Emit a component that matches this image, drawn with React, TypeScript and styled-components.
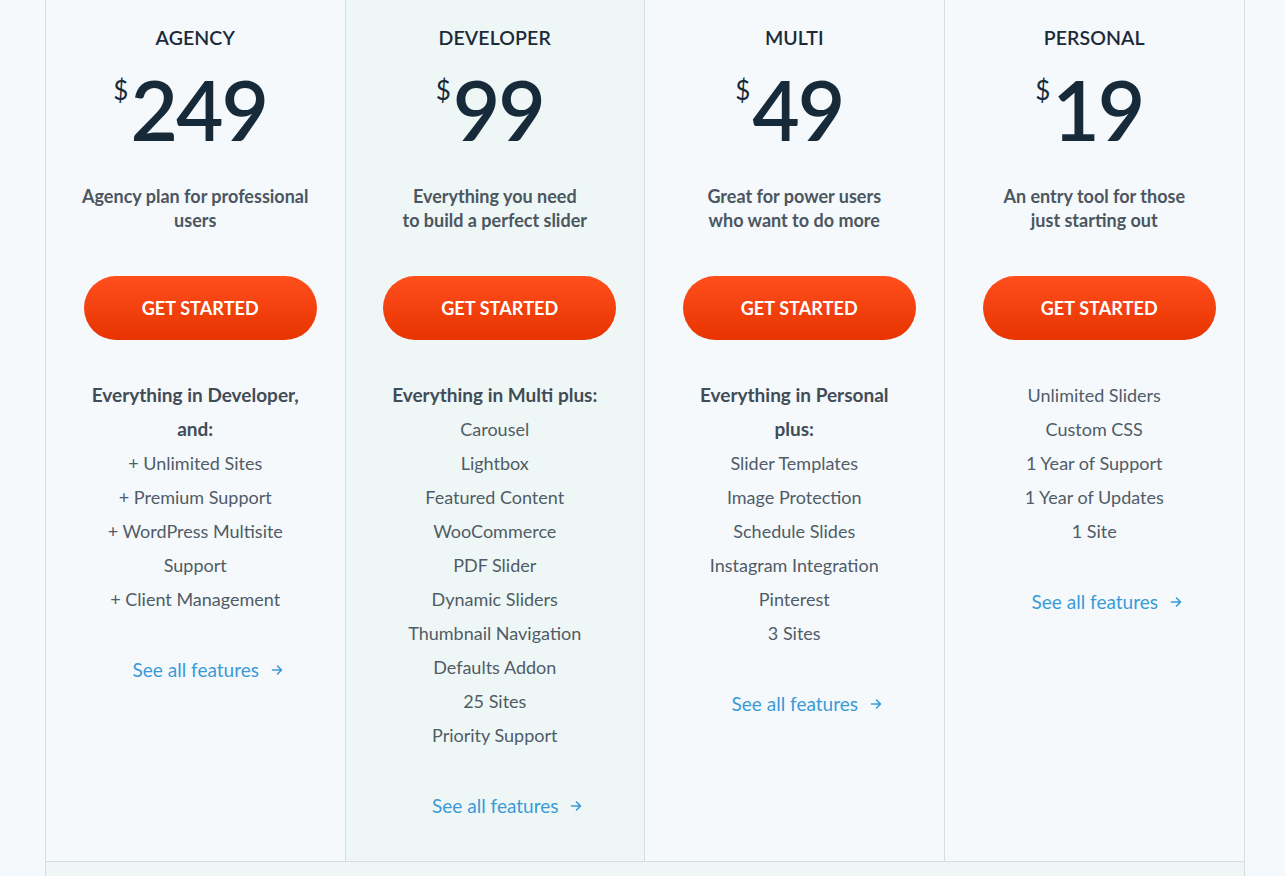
import React from "react";
import styled, { createGlobalStyle } from "styled-components";

const GlobalStyle = createGlobalStyle`
  html, body {
    margin: 0;
    padding: 0;
    background: #f5f9fc;
    font-family: Lato, "Open Sans", sans-serif;
    -webkit-font-smoothing: antialiased;
  }
`;

const Page = styled.div`
  padding-left: 45px;
  height: 876px;
  overflow: hidden;
`;

const Table = styled.div`
  width: 1200px;
  box-sizing: border-box;
  border-left: 1px solid #d8dcdf;
  border-right: 1px solid #d8dcdf;
`;

const Columns = styled.div`
  display: grid;
  grid-template-columns: repeat(4, minmax(0, 1fr));
  height: 861px;
`;

const Column = styled.div<{ $featured?: boolean; $last?: boolean }>`
  display: flex;
  flex-direction: column;
  align-items: center;
  min-width: 0;
  padding: 25px 0 0;
  background: ${({ $featured }) => ($featured ? "#eff7f6" : "transparent")};
  border-right: ${({ $last }) => ($last ? "none" : "1px solid #d8dcdf")};
  text-align: center;
`;

const PlanName = styled.h3`
  margin: 0;
  font-size: 19.5px;
  line-height: 26px;
  font-weight: 600;
  letter-spacing: 0.1px;
  color: #1c2a39;
`;

const Price = styled.div`
  display: flex;
  align-items: flex-start;
  margin: 17px 10px 0 0;
  color: #172a3a;
`;

const Currency = styled.span`
  font-size: 26px;
  line-height: 1;
  margin-top: 9px;
  margin-right: 2px;
`;

const Amount = styled.span`
  font-size: 82px;
  font-weight: 600;
  line-height: 82px;
  letter-spacing: -2px;
`;

const Description = styled.p`
  margin: 34px 0 0;
  font-size: 18px;
  line-height: 24px;
  font-weight: 700;
  color: #4b5661;
`;

const Button = styled.a`
  display: flex;
  align-items: center;
  justify-content: center;
  width: 233px;
  height: 64px;
  margin: 44px 0 0 10px;
  border-radius: 32px;
  background: linear-gradient(180deg, #ff4f1d 0%, #e73400 100%);
  color: #fff;
  font-size: 18px;
  font-weight: 700;
  letter-spacing: 0.1px;
  text-decoration: none;
`;

const Features = styled.ul`
  list-style: none;
  margin: 38px 0 0;
  padding: 0;
`;

const Feature = styled.li<{ $lead?: boolean }>`
  font-size: ${({ $lead }) => ($lead ? "19px" : "18px")};
  line-height: 34px;
  font-weight: ${({ $lead }) => ($lead ? 700 : 400)};
  color: ${({ $lead }) => ($lead ? "#414c57" : "#505c67")};
`;

const SeeAll = styled.a`
  display: flex;
  align-items: center;
  gap: 12px;
  margin: 37px 0 0 25px;
  font-size: 19px;
  line-height: 34px;
  color: #3a9ad6;
  text-decoration: none;
`;

const Footer = styled.div`
  height: 40px;
  border-top: 1px solid #d8dcdf;
  background: #eff7f6;
`;

const Arrow = () => (
  <svg width="12" height="12" viewBox="0 0 12 12" fill="none" stroke="#3a9ad6" strokeWidth="1.6" strokeLinecap="round" strokeLinejoin="round">
    <path d="M1.5 6h9M6.5 2l4 4-4 4" />
  </svg>
);

type Plan = {
  name: string;
  price: string;
  desc: React.ReactNode;
  lead?: React.ReactNode;
  features: string[];
  featured?: boolean;
};

const plans: Plan[] = [
  {
    name: "AGENCY",
    price: "249",
    desc: (
      <>
        Agency plan for professional
        <br />
        users
      </>
    ),
    lead: (
      <>
        Everything in Developer,
        <br />
        and:
      </>
    ),
    features: ["+ Unlimited Sites", "+ Premium Support", "+ WordPress Multisite\nSupport", "+ Client Management"],
  },
  {
    name: "DEVELOPER",
    price: "99",
    featured: true,
    desc: (
      <>
        Everything you need
        <br />
        to build a perfect slider
      </>
    ),
    lead: "Everything in Multi plus:",
    features: [
      "Carousel",
      "Lightbox",
      "Featured Content",
      "WooCommerce",
      "PDF Slider",
      "Dynamic Sliders",
      "Thumbnail Navigation",
      "Defaults Addon",
      "25 Sites",
      "Priority Support",
    ],
  },
  {
    name: "MULTI",
    price: "49",
    desc: (
      <>
        Great for power users
        <br />
        who want to do more
      </>
    ),
    lead: (
      <>
        Everything in Personal
        <br />
        plus:
      </>
    ),
    features: ["Slider Templates", "Image Protection", "Schedule Slides", "Instagram Integration", "Pinterest", "3 Sites"],
  },
  {
    name: "PERSONAL",
    price: "19",
    desc: (
      <>
        An entry tool for those
        <br />
        just starting out
      </>
    ),
    features: ["Unlimited Sliders", "Custom CSS", "1 Year of Support", "1 Year of Updates", "1 Site"],
  },
];

export default function App() {
  return (
    <>
      <GlobalStyle />
      <Page>
        <Table>
          <Columns>
            {plans.map((plan, i) => (
              <Column key={plan.name} $featured={plan.featured} $last={i === plans.length - 1}>
                <PlanName>{plan.name}</PlanName>
                <Price>
                  <Currency>$</Currency>
                  <Amount>{plan.price}</Amount>
                </Price>
                <Description>{plan.desc}</Description>
                <Button href="#">GET STARTED</Button>
                <Features>
                  {plan.lead && <Feature $lead>{plan.lead}</Feature>}
                  {plan.features.map((f) => (
                    <Feature key={f}>
                      {f.split("\n").map((part, j) => (
                        <React.Fragment key={j}>
                          {j > 0 && <br />}
                          {part}
                        </React.Fragment>
                      ))}
                    </Feature>
                  ))}
                </Features>
                <SeeAll href="#">
                  See all features <Arrow />
                </SeeAll>
              </Column>
            ))}
          </Columns>
          <Footer />
        </Table>
      </Page>
    </>
  );
}
